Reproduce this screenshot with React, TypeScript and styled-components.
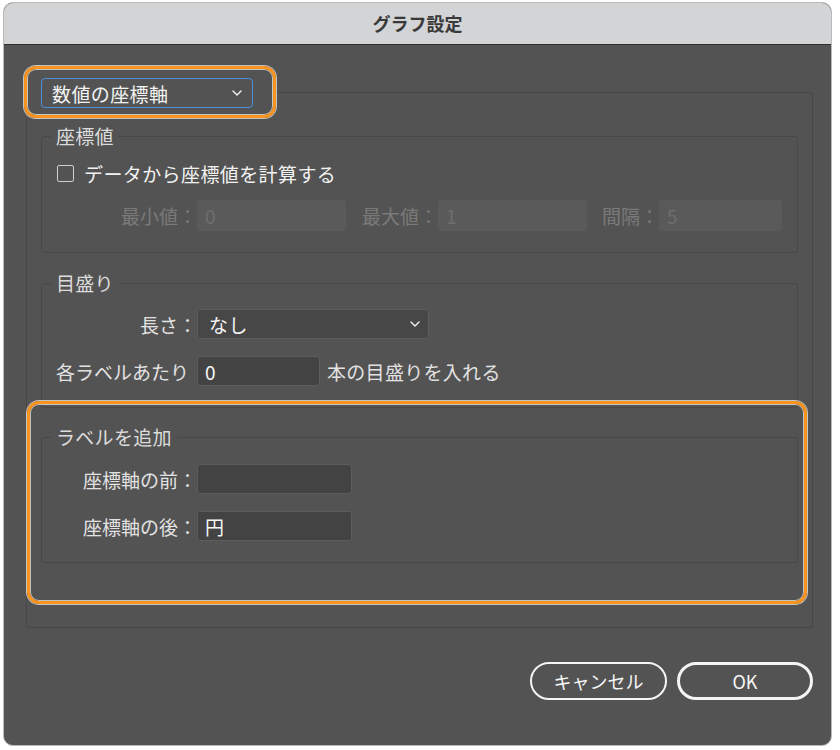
import styled, { createGlobalStyle } from 'styled-components';

const GlobalStyle = createGlobalStyle`
  html, body {
    margin: 0;
    background: #ffffff;
  }
  body {
    font-family: "Noto Sans CJK JP", "Noto Sans", sans-serif;
  }
`;

export default function App() {
  return (
    <>
      <GlobalStyle />
      <Window>
        <TitleBar>グラフ設定</TitleBar>
        <Body>
          <OuterGroup>
            <OuterLegend>
              <LegendHighlight>
                <AxisSelect>
                  <span>数値の座標軸</span>
                  <Chevron />
                </AxisSelect>
              </LegendHighlight>
            </OuterLegend>

            <Group $top={7} $pt={13}>
              <Legend>座標値</Legend>
              <Stack $gap={14}>
                <CheckRow>
                  <CheckBox />
                  <span>データから座標値を計算する</span>
                </CheckRow>
                <Row>
                  <Label $w={141} $disabled>最小値：</Label>
                  <TextBox $w={149} $disabled readOnly defaultValue="0" />
                  <Label $w={92} $disabled>最大値：</Label>
                  <TextBox $w={149} $disabled readOnly defaultValue="1" />
                  <Label $w={72} $disabled>間隔：</Label>
                  <TextBox $w={123} $disabled readOnly defaultValue="5" />
                </Row>
              </Stack>
            </Group>

            <Group $top={19} $pt={15}>
              <Legend>目盛り</Legend>
              <Stack $gap={17}>
                <Row>
                  <Label $w={141}>長さ：</Label>
                  <LengthSelect>
                    <span>なし</span>
                    <Chevron />
                  </LengthSelect>
                </Row>
                <Row>
                  <Label $w={141} $align="left">各ラベルあたり</Label>
                  <TextBox $w={123} readOnly defaultValue="0" />
                  <Suffix>本の目盛りを入れる</Suffix>
                </Row>
              </Stack>
            </Group>

            <SectionHighlight>
              <Group $top={0} $pt={16}>
                <Legend>ラベルを追加</Legend>
                <Stack $gap={17}>
                  <Row>
                    <Label $w={141}>座標軸の前：</Label>
                    <TextBox $w={155} readOnly defaultValue="" />
                  </Row>
                  <Row>
                    <Label $w={141}>座標軸の後：</Label>
                    <TextBox $w={155} readOnly defaultValue="円" />
                  </Row>
                </Stack>
              </Group>
            </SectionHighlight>
          </OuterGroup>

          <Footer>
            <Button>キャンセル</Button>
            <Button $primary>OK</Button>
          </Footer>
        </Body>
      </Window>
    </>
  );
}

function Chevron() {
  return (
    <svg width="10" height="6" viewBox="0 0 10 6" fill="none">
      <path d="M1 1 L5 5 L9 1" stroke="#f2f2f2" strokeWidth="1.4" strokeLinecap="round" strokeLinejoin="round" />
    </svg>
  );
}

const Window = styled.div`
  box-sizing: border-box;
  width: 829px;
  height: 744px;
  margin: 2px 0 0 3px;
  border: 1px solid #bababa;
  border-radius: 10px;
  overflow: hidden;
  display: flex;
  flex-direction: column;
  background: #535353;
`;

const TitleBar = styled.div`
  height: 41px;
  line-height: 40px;
  border-bottom: 1px solid #2f2f2f;
  background: #d3d4d5;
  color: #3a3a3a;
  font-size: 18px;
  font-weight: bold;
  text-align: center;
`;

const Body = styled.div`
  flex: 1;
  padding: 21px 18px 0 22px;
`;

const OuterGroup = styled.fieldset`
  margin: 0;
  padding: 0 14px 23px 14px;
  border: 1px solid #474747;
  border-radius: 3px;
  min-width: 0;
`;

const OuterLegend = styled.legend`
  padding: 0;
  margin-left: -17px;
  line-height: 0;
`;

const Highlight = styled.div`
  border: 3px solid #f7931f;
  border-radius: 12px;
  box-shadow: 0 0 0 1px #c4c4c4, inset 0 0 0 1px #c4c4c4;
`;

const LegendHighlight = styled(Highlight)`
  padding: 9px 20px 7px 14px;
`;

const SectionHighlight = styled(Highlight)`
  margin: -7px -9px 0 -14px;
  padding: 22px 6px 38px 11px;
`;

const SelectBase = styled.div`
  box-sizing: border-box;
  display: flex;
  align-items: center;
  justify-content: space-between;
  height: 30px;
  color: #f4f4f4;
  font-size: 19px;
  letter-spacing: 0.4px;
  line-height: 1;
`;

const AxisSelect = styled(SelectBase)`
  width: 212px;
  padding: 0 10px 0 10px;
  border: 1.5px solid #4b8fdc;
  border-radius: 4px;
`;

const LengthSelect = styled(SelectBase)`
  width: 232px;
  padding: 0 8px 0 11px;
  background: #474747;
  border: 1px solid #5b5b5b;
  border-radius: 3px;
`;

const Group = styled.fieldset<{ $top: number; $pt: number }>`
  margin: ${(p) => p.$top}px 0 0;
  padding: ${(p) => p.$pt}px 14px 21px 14px;
  border: 1px solid #484848;
  border-radius: 3px;
  min-width: 0;
`;

const Legend = styled.legend`
  margin-left: -5px;
  padding: 0 5px;
  color: #dcdcdc;
  font-size: 19px;
  letter-spacing: 0.3px;
  line-height: 22px;
`;

const Stack = styled.div<{ $gap: number }>`
  display: flex;
  flex-direction: column;
  gap: ${(p) => p.$gap}px;
`;

const Row = styled.div`
  display: flex;
  align-items: center;
`;

const CheckRow = styled.label`
  display: flex;
  align-items: center;
  gap: 10px;
  height: 26px;
  color: #f2f2f2;
  font-size: 19px;
  letter-spacing: 0.4px;
`;

const CheckBox = styled.span`
  box-sizing: border-box;
  width: 17px;
  height: 17px;
  margin-left: 1px;
  border: 1.5px solid #cfcfcf;
  border-radius: 2px;
`;

const Label = styled.span<{ $w: number; $disabled?: boolean; $align?: string }>`
  flex-shrink: 0;
  width: ${(p) => p.$w}px;
  text-align: ${(p) => p.$align || 'right'};
  white-space: nowrap;
  color: ${(p) => (p.$disabled ? '#7a7a7a' : '#e2e2e2')};
  font-size: 19px;
`;

const TextBox = styled.input<{ $w: number; $disabled?: boolean }>`
  box-sizing: border-box;
  flex-shrink: 0;
  width: ${(p) => p.$w}px;
  height: ${(p) => (p.$disabled ? 31 : 30)}px;
  padding: 0 7px;
  margin: 0;
  border: 1px solid ${(p) => (p.$disabled ? '#5a5a5a' : '#5c5c5c')};
  border-radius: 3px;
  background: ${(p) => (p.$disabled ? '#5a5a5a' : '#434343')};
  color: ${(p) => (p.$disabled ? '#6e6e6e' : '#f6f6f6')};
  font-family: "Noto Sans CJK JP", "Noto Sans", sans-serif;
  font-size: 19px;
  outline: none;
`;

const Suffix = styled.span`
  margin-left: 7px;
  color: #e2e2e2;
  font-size: 19px;
  letter-spacing: 0.3px;
`;

const Footer = styled.div`
  display: flex;
  justify-content: flex-end;
  gap: 10px;
  margin-top: 34px;
`;

const Button = styled.button<{ $primary?: boolean }>`
  box-sizing: border-box;
  width: ${(p) => (p.$primary ? 136 : 137)}px;
  height: 38px;
  border: ${(p) => (p.$primary ? 3 : 2)}px solid #f4f4f4;
  border-radius: 19px;
  background: transparent;
  color: #f6f6f6;
  font-family: "Noto Sans CJK JP", "Noto Sans", sans-serif;
  font-size: 18px;
  padding: 0;
`;
